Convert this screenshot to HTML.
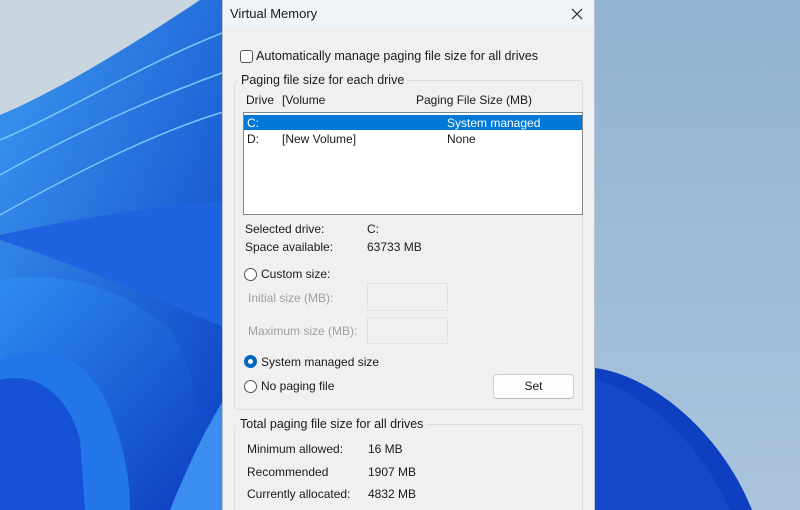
<!DOCTYPE html>
<html><head><meta charset="utf-8"><style>
*{margin:0;padding:0;box-sizing:border-box}
html,body{width:800px;height:510px;overflow:hidden}
body{font-family:"Liberation Sans",sans-serif;font-size:12px;color:#1a1a1a;background:#a3bfd9}
#w{position:relative;width:800px;height:510px;overflow:hidden}
.a{position:absolute;white-space:nowrap;line-height:14px}
.g{color:#a0a0a0}
.rad{position:absolute;width:13px;height:13px;border:1px solid #555;border-radius:50%;background:#fff}
</style></head><body><div id="w">
<svg width="800" height="510" style="position:absolute;left:0;top:0">
<defs>
<linearGradient id="r" x1="0" y1="0" x2="0" y2="1"><stop offset="0" stop-color="#92b2d1"/><stop offset="1" stop-color="#aac4dc"/></linearGradient>
<linearGradient id="b1" x1="0" y1="0" x2="1" y2="1"><stop offset="0" stop-color="#3d9af0"/><stop offset="1" stop-color="#0a3fc4"/></linearGradient>
<linearGradient id="b2" x1="0" y1="0" x2="1" y2="1"><stop offset="0" stop-color="#2f8cf0"/><stop offset="1" stop-color="#0b3cbf"/></linearGradient>
</defs>
<rect width="800" height="510" fill="url(#r)"/>
<rect width="230" height="510" fill="#c9d6e0"/>
<path d="M0 115 C60 90 140 40 200 0 L230 0 L230 510 L0 510Z" fill="url(#b1)"/>
<path d="M0 140 C70 110 150 60 230 30" stroke="#7cc4ff" stroke-width="1.5" fill="none"/>
<path d="M0 175 C80 130 160 95 230 70" stroke="#7cc4ff" stroke-width="1.5" fill="none"/>
<path d="M0 215 C80 170 160 130 230 110" stroke="#7cc4ff" stroke-width="1.5" fill="none"/>
<path d="M0 235 C90 215 170 205 230 200 L230 330 C160 300 90 270 0 240Z" fill="#1f63e0"/>
<path d="M0 280 C60 270 120 285 170 330 C200 380 210 450 215 510 L0 510Z" fill="url(#b2)"/>
<path d="M0 360 C50 340 90 360 110 410 C125 450 130 480 130 510 L0 510Z" fill="#2376ea"/>
<path d="M0 380 C40 370 70 400 80 440 L85 510 L0 510Z" fill="#1552d6"/>
<path d="M170 510 C190 460 210 420 230 390 L230 510Z" fill="#3b8ef0"/>
<path d="M595 368 C650 375 720 430 752 510 L595 510Z" fill="#0d3fc0"/>
<path d="M595 380 C640 390 700 440 730 510 L595 510Z" fill="#1a4fcf" opacity=".6"/>
</svg>
<div style="position:absolute;left:222px;top:-8px;width:373px;height:530px;background:#f0f0f0;border:1px solid #b8c4d0;border-radius:8px"></div>
<div style="position:absolute;left:223px;top:0;width:371px;height:29px;background:#eef3f8"></div>
<div class="a" style="left:230px;top:7px;font-size:13px">Virtual Memory</div>
<svg style="position:absolute;left:571px;top:8px" width="12" height="12"><path d="M1 1L11 11M11 1L1 11" stroke="#222" stroke-width="1.2"/></svg>
<div style="position:absolute;left:240px;top:50px;width:13px;height:13px;border:1px solid #555;border-radius:3px;background:#fff"></div>
<div class="a" style="left:256px;top:49px;font-size:12.6px">Automatically manage paging file size for all drives</div>
<div style="position:absolute;left:234px;top:80px;width:349px;height:330px;border:1px solid #dcdcdc;border-radius:3px"></div>
<div class="a" style="left:238px;top:73px;background:#f0f0f0;padding:0 3px;font-size:12.5px">Paging file size for each drive</div>
<div class="a" style="left:246px;top:93px">Drive</div>
<div class="a" style="left:282px;top:93px">[Volume</div>
<div class="a" style="left:416px;top:93px">Paging File Size (MB)</div>
<div style="position:absolute;left:243px;top:112px;width:340px;height:103px;background:#fff;border:1px solid #828790"></div>
<div style="position:absolute;left:244px;top:115px;width:338px;height:15px;background:#0078d7"></div>
<div class="a" style="left:247px;top:116px;color:#fff">C:</div>
<div class="a" style="left:447px;top:116px;color:#fff">System managed</div>
<div class="a" style="left:247px;top:132px">D:</div>
<div class="a" style="left:282px;top:132px">[New Volume]</div>
<div class="a" style="left:447px;top:132px">None</div>
<div class="a" style="left:245px;top:222px">Selected drive:</div>
<div class="a" style="left:367px;top:222px">C:</div>
<div class="a" style="left:245px;top:240px">Space available:</div>
<div class="a" style="left:367px;top:240px">63733 MB</div>
<div class="rad" style="left:244px;top:268px"></div>
<div class="a" style="left:261px;top:267px">Custom size:</div>
<div class="a g" style="left:248px;top:291px">Initial size (MB):</div>
<div style="position:absolute;left:367px;top:283px;width:81px;height:28px;border:1px solid #e2e2e2"></div>
<div class="a g" style="left:248px;top:324px">Maximum size (MB):</div>
<div style="position:absolute;left:367px;top:317px;width:81px;height:27px;border:1px solid #e2e2e2"></div>
<div class="rad" style="left:244px;top:355px;border:4px solid #0067c0"></div>
<div class="a" style="left:261px;top:355px">System managed size</div>
<div class="rad" style="left:244px;top:380px"></div>
<div class="a" style="left:261px;top:379px">No paging file</div>
<div style="position:absolute;left:493px;top:374px;width:81px;height:25px;background:#fdfdfd;border:1px solid #d0d0d0;border-bottom-color:#bbb;border-radius:4px;text-align:center;line-height:23px">Set</div>
<div style="position:absolute;left:234px;top:424px;width:349px;height:100px;border:1px solid #dcdcdc;border-radius:3px"></div>
<div class="a" style="left:237px;top:417px;background:#f0f0f0;padding:0 3px;font-size:12.5px">Total paging file size for all drives</div>
<div class="a" style="left:247px;top:442px">Minimum allowed:</div>
<div class="a" style="left:368px;top:442px">16 MB</div>
<div class="a" style="left:247px;top:465px">Recommended</div>
<div class="a" style="left:368px;top:465px">1907 MB</div>
<div class="a" style="left:247px;top:487px">Currently allocated:</div>
<div class="a" style="left:368px;top:487px">4832 MB</div>
</div></body></html>
